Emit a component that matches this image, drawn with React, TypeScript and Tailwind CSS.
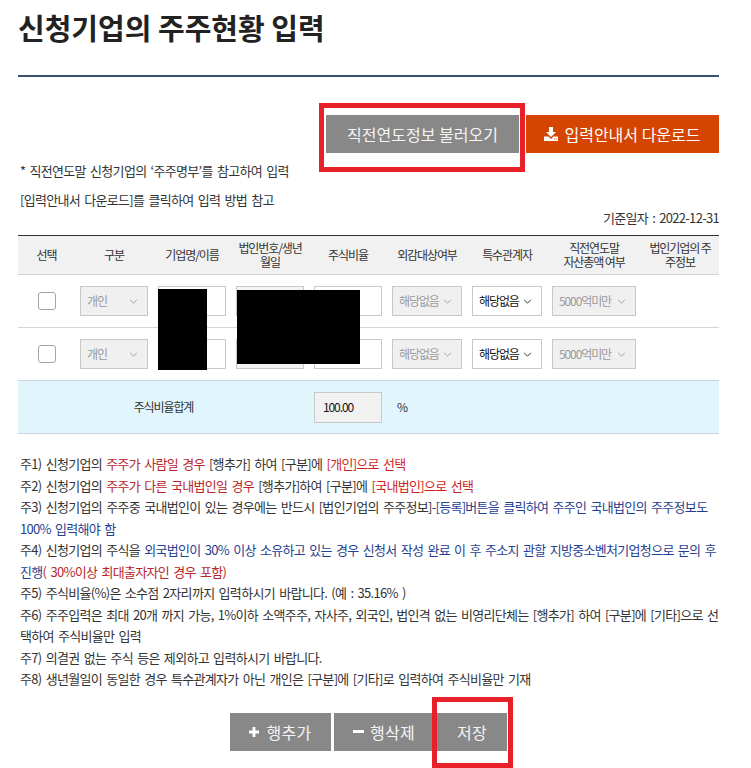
import React from "react";

/* ───────────── Icons ───────────── */

const Chevron = ({ dark }: { dark?: boolean }) => (
  <svg viewBox="0 0 10 6" fill="none" className={dark ? "w-[9px] h-[5px] stroke-[#333]" : "w-[9px] h-[5px] stroke-[#a0a0a0]"} strokeWidth="1.2">
    <path d="M1 1l4 4 4-4" />
  </svg>
);

const DownloadIcon = () => (
  <svg viewBox="0 0 14 14" className="w-[14px] h-[14px] fill-white">
    <path d="M5 0h4v5h3l-5 5-5-5h3z" />
    <path d="M0 9.5h4.5l2.5 2.5 2.5-2.5H14V14H0z" />
    <circle cx="10.6" cy="12" r="0.6" className="fill-[#d34500]" />
    <circle cx="12.3" cy="12" r="0.6" className="fill-[#d34500]" />
  </svg>
);

const PlusIcon = () => (
  <svg viewBox="0 0 10 10" className="w-[10px] h-[10px] fill-white">
    <path d="M3.6 0h2.8v3.6H10v2.8H6.4V10H3.6V6.4H0V3.6h3.6z" />
  </svg>
);

const MinusIcon = () => (
  <svg viewBox="0 0 11 3" className="w-[11px] h-[3px] fill-white">
    <rect x="0" y="0" width="11" height="3" />
  </svg>
);

/* ───────────── Pieces ───────────── */

const COLS = "grid grid-cols-[57px_78px_78px_78px_78px_80px_80px_94px_78px]";

function Select({ value, className, active }: { value: string; className: string; active?: boolean }) {
  return (
    <div
      className={`h-[30px] flex items-center justify-between border border-[#c8c8c8] pl-[6px] pr-[9px] text-[12px] tracking-[-1.1px] ${
        active ? "bg-white text-[#111]" : "bg-[#f0f0f0] text-[#9a9a9a]"
      } ${className}`}
    >
      <span>{value}</span>
      <Chevron dark={active} />
    </div>
  );
}

function Input({ gray }: { gray?: boolean }) {
  return <div className={`h-[30px] w-[68px] border border-[#c8c8c8] ${gray ? "bg-[#f3f3f3]" : "bg-white"}`} />;
}

function DataRow({ last }: { last?: boolean }) {
  return (
    <div className={`${COLS} items-center ${last ? "h-[52px]" : "h-[53px] border-b border-[#d6d6d6]"}`}>
      <div className="flex justify-center">
        <div className="w-[18px] h-[18px] rounded-[3px] border border-[#a5a5a5] bg-white" />
      </div>
      <div className="pl-[5px]">
        <Select value="개인" className="w-[68px]" />
      </div>
      <div className="pl-[5px]">
        <Input />
      </div>
      <div className="pl-[5px]">
        <Input gray />
      </div>
      <div className="pl-[5px]">
        <Input />
      </div>
      <div className="pl-[5px]">
        <Select value="해당없음" className="w-[70px]" />
      </div>
      <div className="pl-[5px]">
        <Select value="해당없음" className="w-[70px]" active />
      </div>
      <div className="pl-[5px]">
        <Select value="5000억미만" className="w-[84px]" />
      </div>
      <div />
    </div>
  );
}

const RED = "text-[#b8262b]";
const BLUE = "text-[#1f3f8f]";

/* ───────────── Page ───────────── */

export default function App() {
  return (
    <div className="relative w-[751px] h-[768px] overflow-hidden bg-white font-['Noto_Sans_CJK_KR',sans-serif] text-[#333]">
      <div className="ml-[18px] w-[701px] pt-[9px]">
        <h1 className="text-[29px] leading-[36px] font-bold text-[#222]">신청기업의 주주현황 입력</h1>
        <div className="mt-[30px] h-[2px] bg-[#3b5170]" />

        {/* top buttons */}
        <div className="mt-[38px] flex justify-end gap-[7px]">
          <button className="w-[193px] h-[38px] bg-[#888] text-[#f4f4f4] text-[16px]">직전연도정보 불러오기</button>
          <button className="w-[193px] h-[38px] bg-[#d34500] text-white text-[16px] flex items-center justify-center gap-[6px]">
            <DownloadIcon />
            입력안내서 다운로드
          </button>
        </div>

        <div className="text-[13px] tracking-[-0.7px] [word-spacing:2px] pl-[2px]">
          <p className="mt-[8px] leading-[20px]">* 직전연도말 신청기업의 ‘주주명부’를 참고하여 입력</p>
          <p className="mt-[9px] leading-[20px]">[입력안내서 다운로드]를 클릭하여 입력 방법 참고</p>
          <p className="text-right leading-[16px]">기준일자 : 2022-12-31</p>
        </div>

        {/* table */}
        <div className="mt-[9px] text-[12px] tracking-[-1.1px] text-[#333]">
          <div className={`${COLS} h-[40px] items-center text-center bg-[#f1f1f1] border-t border-[#333] border-b border-b-[#d3d3d3] leading-[14px]`}>
            <div>선택</div>
            <div>구분</div>
            <div>기업명/이름</div>
            <div>
              법인번호/생년
              <br />
              월일
            </div>
            <div>주식비율</div>
            <div>외감대상여부</div>
            <div>특수관계자</div>
            <div>
              직전연도말
              <br />
              자산총액 여부
            </div>
            <div>
              법인기업의 주
              <br />
              주정보
            </div>
          </div>
          <DataRow />
          <DataRow last />
          <div className={`${COLS} h-[54px] items-center bg-[#e1f5fc] border-y border-[#c9d6df]`}>
            <div className="col-span-4 text-center">주식비율합계</div>
            <div className="pl-[5px]">
              <div className="h-[31px] w-[68px] border border-[#c8c8c8] bg-[#f1f1f1] flex items-center pl-[8px] text-[#111]">100.00</div>
            </div>
            <div className="pl-[10px]">%</div>
          </div>
        </div>

        {/* notes */}
        <div className="mt-[19px] pl-[2px] text-[13px] tracking-[-0.7px] [word-spacing:2px] leading-[21.5px] whitespace-nowrap">
          <div>
            주1) 신청기업의 <span className={RED}>주주가 사람일 경우</span> [행추가] 하여 [구분]에 <span className="text-[#d21f24]">[개인]으로 선택</span>
          </div>
          <div>
            주2) 신청기업의 <span className={RED}>주주가 다른 국내법인일 경우</span> [행추가]하여 [구분]에 <span className="text-[#d21f24]">[국내법인]으로 선택</span>
          </div>
          <div>
            주3) 신청기업의 주주중 국내법인이 있는 경우에는 반드시 [법인기업의 주주정보]<span className={BLUE}>-[등록]버튼을 클릭하여 주주인 국내법인의 주주정보도</span>
          </div>
          <div className={BLUE}>100% 입력해야 함</div>
          <div>
            주4) 신청기업의 주식을 <span className={BLUE}>외국법인이 30% 이상 소유하고 있는 경우 신청서 작성 완료 이 후 주소지 관할 지방중소벤처기업청으로 문의 후</span>
          </div>
          <div>
            <span className={BLUE}>진행</span>
            <span className={RED}>( 30%이상 최대출자자인 경우 포함)</span>
          </div>
          <div>주5) 주식비율(%)은 소수점 2자리까지 입력하시기 바랍니다. (예 : 35.16% )</div>
          <div>주6) 주주입력은 최대 20개 까지 가능, 1%이하 소액주주, 자사주, 외국인, 법인격 없는 비영리단체는 [행추가] 하여 [구분]에 [기타]으로 선</div>
          <div>택하여 주식비율만 입력</div>
          <div>주7) 의결권 없는 주식 등은 제외하고 입력하시기 바랍니다.</div>
          <div>주8) 생년월일이 동일한 경우 특수관계자가 아닌 개인은 [구분]에 [기타]로 입력하여 주식비율만 기재</div>
        </div>

        {/* bottom buttons */}
        <div className="mt-[23px] flex justify-center gap-[3px] text-[16px] tracking-[0.3px] text-[#f4f4f4]">
          <button className="w-[101px] h-[38px] bg-[#888] flex items-center justify-center gap-[7px]">
            <PlusIcon />
            행추가
          </button>
          <button className="w-[100px] h-[38px] bg-[#888] flex items-center justify-center gap-[6px]">
            <MinusIcon />
            행삭제
          </button>
          <button className="w-[70px] h-[38px] bg-[#888]">저장</button>
        </div>
      </div>

      {/* redactions */}
      <div className="absolute left-[158px] top-[289px] w-[49px] h-[81px] bg-black" />
      <div className="absolute left-[237px] top-[290px] w-[123px] h-[74px] bg-black" />

      {/* annotation boxes */}
      <div className="absolute left-[319px] top-[103px] w-[206px] h-[69px] border-[5px] border-[#e8202a]" />
      <div className="absolute left-[432px] top-[697px] w-[81px] h-[71px] border-[5px] border-[#e8202a]" />
    </div>
  );
}
